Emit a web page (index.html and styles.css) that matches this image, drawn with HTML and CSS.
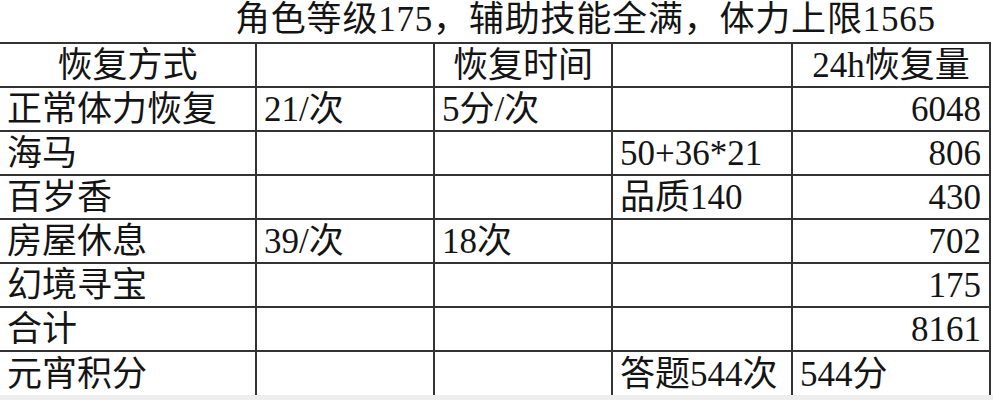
FILE: index.html
```html
<!DOCTYPE html>
<html>
<head>
<meta charset="utf-8">
<link rel="stylesheet" href="styles.css">
</head>
<body>
<div class="sheet">
  <div class="title">角色等级175，辅助技能全满，体力上限1565</div>
  <table class="grid">
    <colgroup>
      <col class="c1"><col class="c2"><col class="c3"><col class="c4"><col class="c5">
    </colgroup>
    <tr><td class="center">恢复方式</td><td></td><td class="center">恢复时间</td><td></td><td class="center">24h恢复量</td></tr>
    <tr><td>正常体力恢复</td><td>21/次</td><td>5分/次</td><td></td><td class="num">6048</td></tr>
    <tr><td>海马</td><td></td><td></td><td>50+36*21</td><td class="num">806</td></tr>
    <tr><td>百岁香</td><td></td><td></td><td>品质140</td><td class="num">430</td></tr>
    <tr><td>房屋休息</td><td>39/次</td><td>18次</td><td></td><td class="num">702</td></tr>
    <tr><td>幻境寻宝</td><td></td><td></td><td></td><td class="num">175</td></tr>
    <tr><td>合计</td><td></td><td></td><td></td><td class="num">8161</td></tr>
    <tr><td>元宵积分</td><td></td><td></td><td>答题544次</td><td>544分</td></tr>
  </table>
  <div class="footer"></div>
</div>
</body>
</html>
```
FILE: styles.css
```css
html, body {
  margin: 0;
  padding: 0;
  background: #ffffff;
}
.sheet {
  width: 993px;
  height: 400px;
  overflow: hidden;
  font-family: "Liberation Serif", "Times New Roman", "DejaVu Serif", "Noto Sans CJK SC", serif;
  font-size: 35px;
  color: #141414;
  display: flex;
  flex-direction: column;
}
.title {
  height: 42px;
  line-height: 40px;
  padding-left: 235px;
  letter-spacing: 0.8px;
  white-space: nowrap;
  box-sizing: border-box;
}
.grid {
  border-collapse: collapse;
  table-layout: fixed;
  width: 990px;
}
.c1 { width: 256px; }
.c2 { width: 178px; }
.c3 { width: 178px; }
.c4 { width: 180px; }
.c5 { width: 198px; }
.grid tr {
  height: 44px;
}
.grid td {
  border: 2px solid #333333;
  border-left: none;
  padding: 0 7px;
  height: 42px;
  line-height: 40px;
  vertical-align: bottom;
  white-space: nowrap;
  overflow: hidden;
}
.grid td + td {
  border-left: 2px solid #333333;
}
.grid tr:last-child td {
  border-bottom: none;
}
.grid td.center { text-align: center; }
.grid td.num { text-align: right; padding-right: 8px; }
.footer {
  flex: 1;
  background: #eeeeee;
}
```
